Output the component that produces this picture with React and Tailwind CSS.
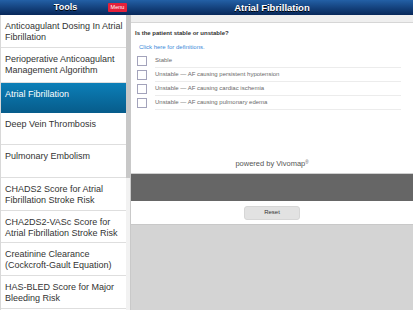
import React from 'react';

const tools = [
  { title: 'Anticoagulant Dosing In Atrial Fibrillation', h: 'h-[33px]' },
  { title: 'Perioperative Anticoagulant Management Algorithm', h: 'h-[35px]' },
  { title: 'Atrial Fibrillation', h: 'h-[30px]', active: true },
  { title: 'Deep Vein Thrombosis', h: 'h-[32px]' },
  { title: 'Pulmonary Embolism', h: 'h-[33px]' },
  { title: 'CHADS2 Score for Atrial Fibrillation Stroke Risk', h: 'h-[33px]' },
  { title: 'CHA2DS2-VASc Score for Atrial Fibrillation Stroke Risk', h: 'h-[32px]' },
  { title: 'Creatinine Clearance (Cockcroft-Gault Equation)', h: 'h-[33px]' },
  { title: 'HAS-BLED Score for Major Bleeding Risk', h: 'h-[33px]' },
];

const options = [
  'Stable',
  'Unstable — AF causing persistent hypotension',
  'Unstable — AF causing cardiac ischemia',
  'Unstable — AF causing pulmonary edema',
];

const App = () => {
  return (
    <div className="w-[413px] h-[310px] flex flex-col overflow-hidden bg-white font-['Liberation_Sans',Arial,sans-serif]">
      {/* top bar */}
      <div className="h-[15px] flex shrink-0 bg-gradient-to-b from-[#2360a6] to-[#08285a] text-white">
        <div className="relative w-[131px] flex items-center justify-center">
          <span className="text-[9px] font-bold leading-none [text-shadow:0_1px_0_#000]">Tools</span>
          <span className="absolute right-[4px] top-[3px] h-[9px] w-[19px] rounded-[1px] bg-[#e4203a] text-[5.5px] leading-[9px] text-center">
            Menu
          </span>
        </div>
        <div className="flex-1 flex items-center justify-center">
          <span className="text-[9.5px] font-bold leading-none [text-shadow:0_1px_0_#000]">Atrial Fibrillation</span>
        </div>
      </div>

      <div className="flex flex-1 min-h-0">
        {/* tools list */}
        <div className="w-[131px] flex shrink-0 border-r border-[#c9c9c9]">
          <div className="w-[126px] border-l border-[#d8d8d8]">
            {tools.map((t) => (
              <div
                key={t.title}
                className={`${t.h} pl-[4px] pt-[6px] text-[9px] leading-[11px] border-b ${
                  t.active
                    ? 'bg-gradient-to-b from-[#0c7fb8] to-[#075d8c] text-white border-[#075d8c]'
                    : 'text-[#333] border-[#dedede]'
                }`}
              >
                {t.title}
              </div>
            ))}
          </div>
          <div className="w-[4px] bg-[#f2f2f2]">
            <div className="h-[163px] bg-[#c8c8c8]" />
          </div>
        </div>

        {/* calculator */}
        <div className="flex-1 flex flex-col">
          <div className="h-[8px] bg-[#efefef] border-b border-[#d6d6d6]" />
          <div className="h-[151px] flex flex-col border-b border-[#cfcfcf]">
            <div className="pl-[4px] pt-[7px] text-[6px] leading-[7px] font-bold text-[#333]">
              Is the patient stable or unstable?
            </div>
            <div className="pl-[8px] pt-[7px] text-[6px] leading-[7px] text-[#3b8ad9]">Click here for definitions.</div>
            <div className="mt-[3px]">
              {options.map((o) => (
                <div key={o} className="h-[14px] flex items-center">
                  <div className="ml-[6px] w-[10px] h-[10px] border border-[#a3a3bb] bg-white" />
                  <div className="ml-[8px] mr-[12px] flex-1 h-full flex items-center border-b border-[#ececec] text-[6px] text-[#6a6a6a]">
                    {o}
                  </div>
                </div>
              ))}
            </div>
            <div className="mt-auto pb-[5px] text-center text-[7.5px] leading-[9px] text-[#555]">
              <span className="text-[#555]">powered by Vivomap</span>
              <sup className="text-[4.5px] text-[#555]">®</sup>
            </div>
          </div>
          <div className="h-[27px] bg-[#666666]" />
          <div className="h-[23px] flex items-center justify-center">
            <div className="w-[56px] h-[14px] rounded-[3px] bg-[#e2e2e2] border border-[#d6d6d6] flex items-center justify-center text-[6px] text-[#333]">
              Reset
            </div>
          </div>
          <div className="flex-1 bg-[#d4d4d4] border-t border-[#c8c8c8]" />
        </div>
      </div>
    </div>
  );
};

export default App;
